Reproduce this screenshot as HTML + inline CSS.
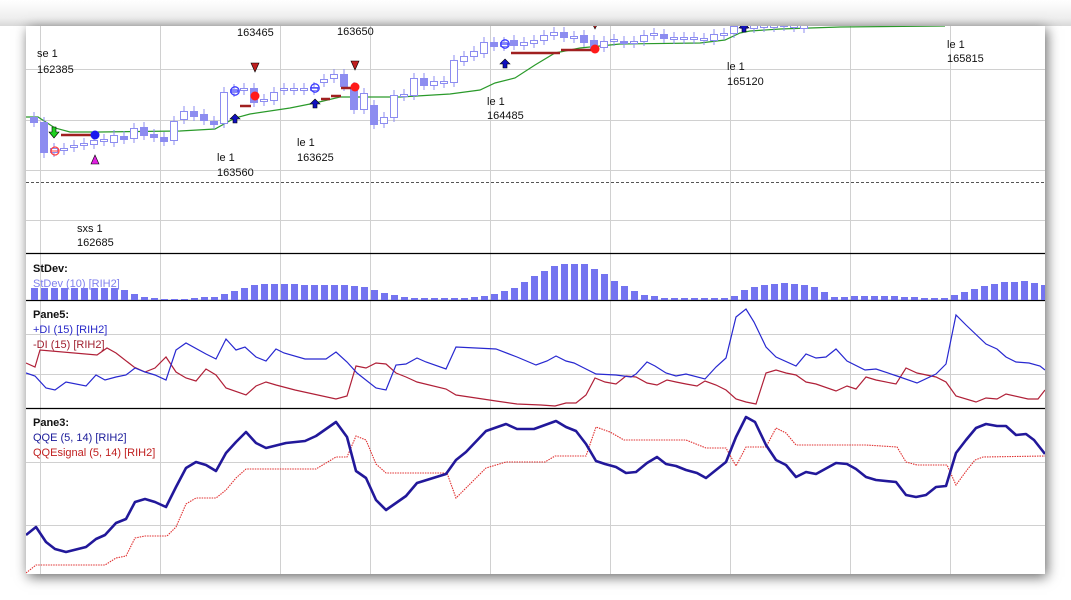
<!DOCTYPE html>
<html><head><meta charset="utf-8">
<style>
html,body{margin:0;padding:0;background:#fff;width:1071px;height:600px;overflow:hidden}
#frame{position:absolute;left:26px;top:26px;width:1019px;height:548px;background:#fff;box-shadow:2px 3px 12px rgba(0,0,0,.6);overflow:hidden}
#top{position:absolute;left:0;top:0;width:1071px;height:26px;background:linear-gradient(#fff,#eee 70%,#d8d8d8)}
svg{position:absolute;left:0;top:0}
text{font-family:"Liberation Sans",sans-serif;font-size:11px;fill:#111}
</style></head><body>
<div id="top"></div>
<div id="frame">
<svg width="1019" height="548" viewBox="26 26 1019 548">
<g stroke="#d0d0d0" stroke-width="1">
<path d="M40.5 26V574M160.5 26V574M280.5 26V574M370.5 26V574M490.5 26V574M610.5 26V574M730.5 26V574M850.5 26V574M950.5 26V574"/>
<path d="M26 69.5H1045M26 120.5H1045M26 170.5H1045M26 220.5H1045M26 334.5H1045M26 374.5H1045M26 462.5H1045M26 525.5H1045"/>
</g>
<path d="M26 182.5H1045" stroke="#555" stroke-dasharray="3,2"/>
<path d="M26 253.5H1045M26 300.5H1045M26 408.5H1045" stroke="#000" stroke-width="1.2"/>
<!-- green line -->
<polyline fill="none" stroke="#2a9a2a" stroke-width="1.2" points="26,117 38,117 55,128 70,132 100,132 180,131 215,129 235,118 250,114 290,108 315,103 340,97 360,97 400,97 450,94 480,90 495,83 515,78 535,65 555,53 580,48 620,44 700,43 725,40 740,33 750,31 780,29 840,27 945,26"/>
<!-- wicks -->
<path stroke="#8c8cf0" stroke-width="1" fill="none" d="M34,112V127M44,117V158M124,131V144M144,122V140M154,129V142M164,132V146M194,106V121M204,109V125M214,116V129M254,83V107M344,69V91M354,82V114M374,100V129M424,73V90M494,37V51M514,35V50M564,27V42M584,30V47M594,35V53M624,36V48M664,29V43M54,143V157M64,143V155M74,140V152M84,138V150M94,135V149M104,134V146M114,130V147M134,123V143M174,116V145M184,106V124M224,87V128M234,84V97M244,83V95M264,94V106M274,87V105M284,83V95M294,83V95M304,83V95M314,82V95M324,74V87M334,69V83M364,88V114M384,112V128M394,90V122M404,89V101M414,73V100M434,76V90M444,76V88M454,55V87M464,51V66M474,46V61M484,37V58M504,37V51M524,37V50M534,35V48M544,30V45M554,27V40M574,31V43M604,36V52M614,34V46M634,36V48M644,30V46M654,28V40M674,32V44M684,32V44M694,32V44M704,33V45M714,29V45M724,28V40M734,21V38M744,19V33M754,19V33M764,17V32M774,17V32M784,15V31M794,15V32M804,17V33"/>
<!-- filled bodies -->
<path fill="#8c8cf0" stroke="#8c8cf0" d="M30.5,117.5h7v5h-7zM40.5,122.5h7v30h-7zM120.5,136.5h7v3h-7zM140.5,127.5h7v8h-7zM150.5,134.5h7v3h-7zM160.5,137.5h7v4h-7zM190.5,111.5h7v5h-7zM200.5,114.5h7v6h-7zM210.5,121.5h7v3h-7zM250.5,88.5h7v14h-7zM340.5,74.5h7v12h-7zM350.5,87.5h7v22h-7zM370.5,105.5h7v19h-7zM420.5,78.5h7v7h-7zM490.5,42.5h7v4h-7zM510.5,40.5h7v5h-7zM560.5,32.5h7v5h-7zM580.5,35.5h7v7h-7zM590.5,40.5h7v8h-7zM620.5,41.5h7v2h-7zM660.5,34.5h7v4h-7z"/>
<!-- hollow bodies -->
<path fill="#fff" stroke="#8c8cf0" d="M50.5,148.5h7v4h-7zM60.5,148.5h7v2h-7zM70.5,145.5h7v2h-7zM80.5,143.5h7v2h-7zM90.5,140.5h7v4h-7zM100.5,139.5h7v2h-7zM110.5,135.5h7v7h-7zM130.5,128.5h7v10h-7zM170.5,121.5h7v19h-7zM180.5,111.5h7v8h-7zM220.5,92.5h7v31h-7zM230.5,89.5h7v3h-7zM240.5,88.5h7v2h-7zM260.5,99.5h7v2h-7zM270.5,92.5h7v8h-7zM280.5,88.5h7v2h-7zM290.5,88.5h7v2h-7zM300.5,88.5h7v2h-7zM310.5,87.5h7v3h-7zM320.5,79.5h7v3h-7zM330.5,74.5h7v4h-7zM360.5,93.5h7v16h-7zM380.5,117.5h7v6h-7zM390.5,95.5h7v22h-7zM400.5,94.5h7v2h-7zM410.5,78.5h7v17h-7zM430.5,81.5h7v4h-7zM440.5,81.5h7v2h-7zM450.5,60.5h7v22h-7zM460.5,56.5h7v5h-7zM470.5,51.5h7v5h-7zM480.5,42.5h7v11h-7zM500.5,42.5h7v4h-7zM520.5,42.5h7v3h-7zM530.5,40.5h7v3h-7zM540.5,35.5h7v5h-7zM550.5,32.5h7v3h-7zM570.5,36.5h7v2h-7zM600.5,41.5h7v6h-7zM610.5,39.5h7v2h-7zM630.5,41.5h7v2h-7zM640.5,35.5h7v6h-7zM650.5,33.5h7v2h-7zM670.5,37.5h7v2h-7zM680.5,37.5h7v2h-7zM690.5,37.5h7v2h-7zM700.5,38.5h7v2h-7zM710.5,34.5h7v6h-7zM720.5,33.5h7v2h-7zM730.5,26.5h7v7h-7zM740.5,24.5h7v4h-7zM750.5,24.5h7v4h-7zM760.5,22.5h7v5h-7zM770.5,22.5h7v5h-7zM780.5,20.5h7v6h-7zM790.5,20.5h7v7h-7zM800.5,22.5h7v6h-7z"/>
<!-- trade markers -->
<g stroke="#a02020" stroke-width="2.5">
<path d="M61 135H92M240 106H251M321 99H330M331 96H341M341 88H351M511 53H560M561 50H592"/>
</g>
<g fill="#ff1a1a"><circle cx="255" cy="96" r="4.5"/><circle cx="355" cy="87" r="4.5"/><circle cx="595" cy="49" r="4.5"/></g>
<circle cx="95" cy="135" r="4.5" fill="#1a1aee"/>
<g fill="none" stroke="#3a3aff" stroke-width="1.3"><circle cx="235" cy="91" r="4.2"/><circle cx="315" cy="88" r="4.2"/><circle cx="505" cy="44" r="4.2"/><path d="M231 91h8M311 88h8M501 44h8"/></g>
<circle cx="55" cy="151" r="4" fill="none" stroke="#ff4040" stroke-width="1.3"/><path d="M51 151h8" stroke="#ff4040"/>
<g fill="#c02020" stroke="#000" stroke-width=".6"><path d="M251 63h8l-4 9z"/><path d="M351 61h8l-4 9z"/><path d="M592 23h6l-3 6z"/></g>
<g fill="#1010c0" stroke="#000" stroke-width=".6"><path d="M235 114l5 5h-3v4h-4v-4h-3z"/><path d="M315 99l5 5h-3v4h-4v-4h-3z"/><path d="M505 59l5 5h-3v4h-4v-4h-3z"/><path d="M744 23l5 5h-3v4h-4v-4h-3z"/></g>
<path d="M52 127h4v5h3l-5 6l-5-6h3z" fill="#20d020" stroke="#000" stroke-width=".6"/>
<path d="M95 155l4 9h-8z" fill="#e020e0" stroke="#000" stroke-width=".6"/>
<!-- labels main -->
<text x="37" y="57">se 1</text><text x="37" y="73">162385</text>
<text x="237" y="36">163465</text><text x="337" y="35">163650</text>
<text x="217" y="161">le 1</text><text x="217" y="176">163560</text>
<text x="297" y="146">le 1</text><text x="297" y="161">163625</text>
<text x="77" y="232">sxs 1</text><text x="77" y="246">162685</text>
<text x="487" y="105">le 1</text><text x="487" y="119">164485</text>
<text x="727" y="70">le 1</text><text x="727" y="85">165120</text>
<text x="947" y="48">le 1</text><text x="947" y="62">165815</text>
<!-- StDev bars -->
<path fill="#7474f0" d="M31 300v-12h7v12zM41 300v-12h7v12zM51 300v-12h7v12zM61 300v-12h7v12zM71 300v-12h7v12zM81 300v-12h7v12zM91 300v-12h7v12zM101 300v-12h7v12zM111 300v-12h7v12zM121 300v-10h7v10zM131 300v-6h7v6zM141 300v-3h7v3zM151 300v-2h7v2zM161 300v-1h7v1zM171 300v-1h7v1zM181 300v-1h7v1zM191 300v-2h7v2zM201 300v-3h7v3zM211 300v-3h7v3zM221 300v-6h7v6zM231 300v-9h7v9zM241 300v-12h7v12zM251 300v-15h7v15zM261 300v-16h7v16zM271 300v-16h7v16zM281 300v-16h7v16zM291 300v-16h7v16zM301 300v-15h7v15zM311 300v-15h7v15zM321 300v-15h7v15zM331 300v-15h7v15zM341 300v-15h7v15zM351 300v-14h7v14zM361 300v-13h7v13zM371 300v-10h7v10zM381 300v-7h7v7zM391 300v-5h7v5zM401 300v-3h7v3zM411 300v-2h7v2zM421 300v-2h7v2zM431 300v-2h7v2zM441 300v-2h7v2zM451 300v-2h7v2zM461 300v-2h7v2zM471 300v-3h7v3zM481 300v-4h7v4zM491 300v-6h7v6zM501 300v-9h7v9zM511 300v-12h7v12zM521 300v-18h7v18zM531 300v-24h7v24zM541 300v-29h7v29zM551 300v-34h7v34zM561 300v-36h7v36zM571 300v-36h7v36zM581 300v-36h7v36zM591 300v-31h7v31zM601 300v-26h7v26zM611 300v-19h7v19zM621 300v-14h7v14zM631 300v-9h7v9zM641 300v-5h7v5zM651 300v-4h7v4zM661 300v-2h7v2zM671 300v-2h7v2zM681 300v-2h7v2zM691 300v-2h7v2zM701 300v-2h7v2zM711 300v-2h7v2zM721 300v-2h7v2zM731 300v-4h7v4zM741 300v-10h7v10zM751 300v-13h7v13zM761 300v-15h7v15zM771 300v-16h7v16zM781 300v-17h7v17zM791 300v-16h7v16zM801 300v-15h7v15zM811 300v-13h7v13zM821 300v-8h7v8zM831 300v-3h7v3zM841 300v-3h7v3zM851 300v-4h7v4zM861 300v-4h7v4zM871 300v-4h7v4zM881 300v-4h7v4zM891 300v-4h7v4zM901 300v-3h7v3zM911 300v-3h7v3zM921 300v-2h7v2zM931 300v-2h7v2zM941 300v-2h7v2zM951 300v-5h7v5zM961 300v-8h7v8zM971 300v-11h7v11zM981 300v-14h7v14zM991 300v-16h7v16zM1001 300v-18h7v18zM1011 300v-18h7v18zM1021 300v-19h7v19zM1031 300v-17h7v17zM1041 300v-15h7v15z"/>
<text x="33" y="272" style="font-weight:bold">StDev:</text>
<text x="33" y="287" style="fill:#8080ee">StDev (10) [RIH2]</text>
<!-- Pane5 -->
<polyline fill="none" stroke="#b02038" stroke-width="1.2" points="26,363 35,367 40,350 97,355 107,348 116,353 134,367 145,372 155,368 166,357 176,372 186,378 196,381 206,369 216,375 226,388 246,395 256,386 266,382 276,385 295,390 336,399 347,396 356,366 366,368 376,363 386,364 396,373 406,377 417,382 446,389 456,395 496,401 517,404 541,405 555,406 566,403 576,403 586,395 595,378 605,382 616,384 626,376 636,377 647,383 657,385 667,380 676,382 686,384 697,386 705,381 716,385 726,390 736,399 746,402 756,404 766,373 776,370 786,373 796,375 806,382 816,384 836,391 847,386 856,389 866,377 876,380 896,384 906,368 917,373 936,377 946,382 956,396 976,402 986,398 997,399 1006,394 1028,399 1038,399 1045,390"/>
<polyline fill="none" stroke="#2828d0" stroke-width="1.2" points="26,373 35,376 46,388 55,390 66,382 86,386 96,375 105,380 116,377 126,375 135,368 145,372 155,375 166,380 176,350 186,343 206,354 216,359 226,339 236,350 245,347 256,357 266,361 276,349 284,353 305,359 326,359 336,352 347,362 357,373 376,388 386,390 396,365 406,364 417,358 426,362 446,369 456,347 496,349 517,357 536,365 547,361 556,356 566,361 574,363 584,368 596,374 616,375 631,377 636,374 647,362 655,366 666,373 676,376 686,374 705,379 716,367 726,358 736,317 746,309 754,322 766,347 776,357 796,366 806,354 816,358 826,357 836,349 847,361 865,370 876,369 897,376 917,383 936,374 946,364 956,315 966,325 986,344 997,349 1006,357 1016,362 1029,363 1040,366 1045,370"/>
<text x="33" y="318" style="font-weight:bold">Pane5:</text>
<text x="33" y="333" style="fill:#2828c8">+DI (15) [RIH2]</text>
<text x="33" y="348" style="fill:#a02030">-DI (15) [RIH2]</text>
<!-- Pane3 -->
<polyline fill="none" stroke="#e03030" stroke-width="1.1" stroke-dasharray="1.5,1" points="26,573 36,565 105,565 116,558 126,556 135,538 145,536 167,536 176,527 186,504 196,498 216,498 226,490 236,478 246,469 316,469 336,457 347,457 356,436 366,440 376,464 386,473 447,473 456,498 466,488 486,468 506,462 545,462 555,456 586,456 596,427 610,432 624,440 686,440 706,448 726,448 736,466 746,447 766,447 776,428 786,433 796,445 866,445 897,447 906,462 917,465 947,465 956,485 967,470 975,460 983,457 1045,456"/>
<polyline fill="none" stroke="#22189a" stroke-width="2.6" stroke-linejoin="round" points="26,535 36,527 46,542 55,549 66,552 86,547 96,539 105,535 116,523 126,519 135,502 145,499 155,502 166,507 176,487 186,468 196,462 206,465 216,471 226,453 236,442 246,432 256,443 266,448 286,443 305,441 316,436 336,422 347,437 356,471 366,478 376,500 386,510 396,503 406,496 417,483 446,474 456,460 466,452 486,431 506,424 517,429 534,429 545,425 556,421 566,427 576,431 586,444 596,461 605,464 616,467 626,473 636,472 647,463 657,457 666,464 676,466 686,470 697,473 706,478 716,470 726,462 736,437 746,417 755,422 766,445 776,460 786,465 796,477 806,472 816,474 836,463 847,464 856,469 866,477 876,480 896,482 906,495 916,497 926,495 936,487 946,486 956,453 966,440 976,428 986,424 997,426 1006,426 1016,435 1026,434 1034,440 1045,454"/>
<text x="33" y="426" style="font-weight:bold">Pane3:</text>
<text x="33" y="441" style="fill:#1a1a99">QQE (5, 14) [RIH2]</text>
<text x="33" y="456" style="fill:#c02020">QQEsignal (5, 14) [RIH2]</text>
</svg>
</div>
</body></html>
